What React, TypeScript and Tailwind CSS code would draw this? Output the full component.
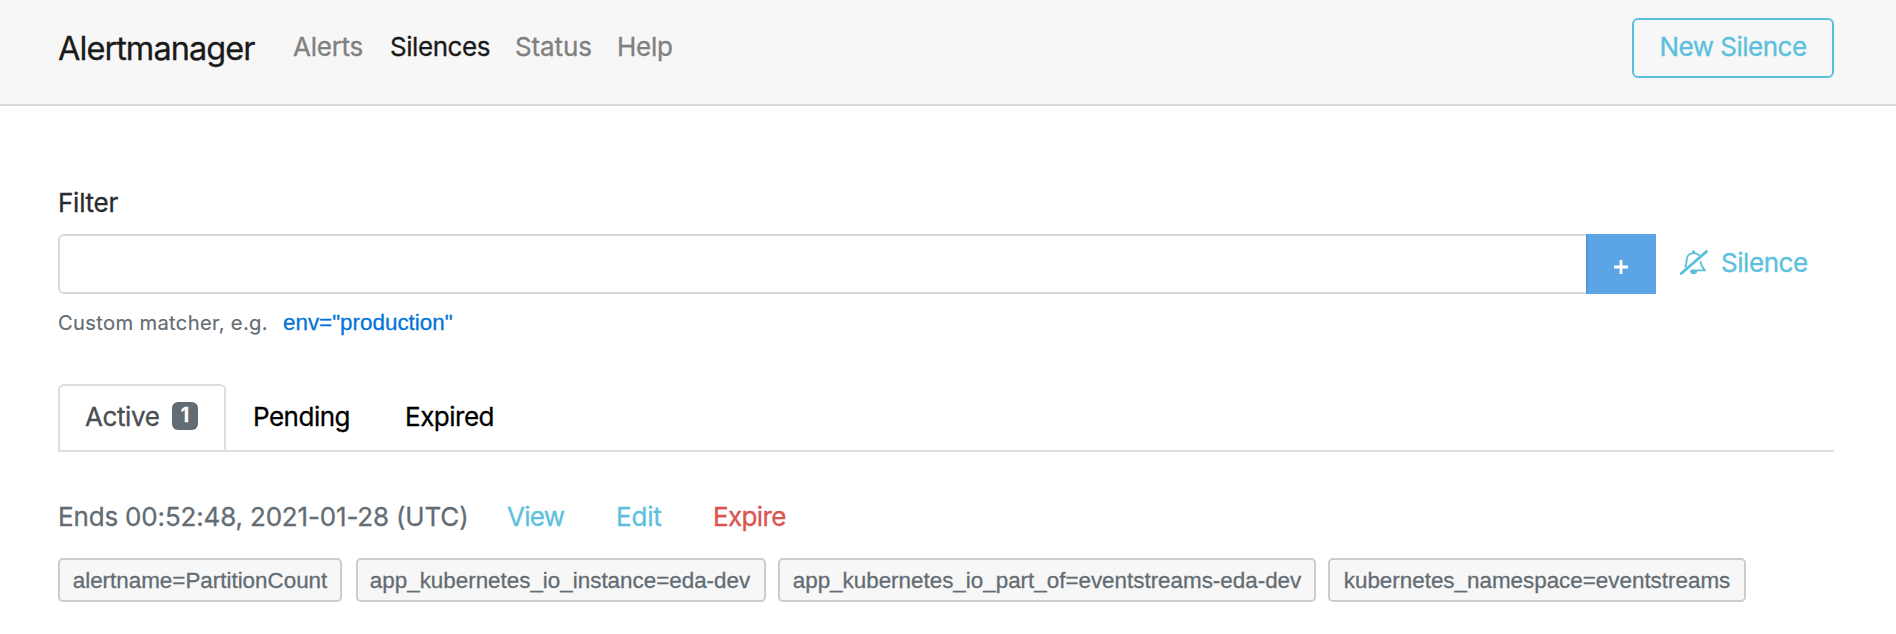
const nav = [
  { label: "Alerts", cls: "ml-[37px] w-[97px] tracking-[-0.25px] text-[#808080]" },
  { label: "Silences", cls: "w-[125px] tracking-[-0.45px] text-[#1a1a1a]" },
  { label: "Status", cls: "w-[102px] tracking-[-0.1px] text-[#808080]" },
  { label: "Help", cls: "tracking-[-0.3px] text-[#808080]" },
];

const matchers = [
  { text: "alertname=PartitionCount", cls: "w-[284px] mr-[14px]" },
  { text: "app_kubernetes_io_instance=eda-dev", cls: "w-[410px] mr-[12px] pr-[2px]" },
  { text: "app_kubernetes_io_part_of=eventstreams-eda-dev", cls: "w-[538px] mr-[12px]" },
  { text: "kubernetes_namespace=eventstreams", cls: "w-[418px]" },
];

function BellSlash() {
  return (
    <svg viewBox="0 0 30 28" className="h-[28px] w-[30px]" fill="none" stroke="currentColor" strokeLinecap="round" strokeLinejoin="round">
      <path d="M7.4 18.8C8.6 16.6 8.4 13.6 8.8 11C9.4 7.3 12 5.2 15.6 5.2C18.4 5.2 20.6 6.3 21.8 8.4" strokeWidth="1.8" />
      <path d="M22.6 14C22.8 18 24.6 19.6 27.2 22.4H13.5" strokeWidth="1.8" />
      <path d="M15.6 4.8V3.6" strokeWidth="2.8" />
      <path d="M12 22.5H19.4A3.7 3.7 0 0 1 12 22.5Z" fill="currentColor" stroke="none" />
      <path d="M3.3 25.5L28.5 3.5" strokeWidth="2.9" />
    </svg>
  );
}

export default function App() {
  return (
    <div className="h-[634px] overflow-hidden bg-white font-['Inter',sans-serif] text-[26px] leading-[39px] text-[#292b2c] [-webkit-text-stroke:0.3px]">
      <header className="flex h-[106px] items-start border-b-2 border-[#d9d9d9] bg-[#f7f7f7] px-[58px]">
        <a className="mt-[24px] w-[198px] whitespace-nowrap text-[32.5px] leading-[49px] tracking-[-0.95px] text-[#1a1a1a]">Alertmanager</a>
        <nav className="mt-[27px] flex">
          {nav.map((n) => (
            <a key={n.label} className={n.cls}>{n.label}</a>
          ))}
        </nav>
        <button className="ml-auto mt-[18px] mr-[4px] flex h-[60px] w-[202px] items-center justify-center rounded-[6px] border-2 border-[#5bc0de] pb-[3px] tracking-[-0.5px] text-[#5bc0de]">
          New Silence
        </button>
      </header>

      <main className="px-[58px] pt-[77px]">
        <label className="block tracking-[-0.25px]">Filter</label>
        <div className="mt-[12px] flex h-[60px]">
          <div className="w-[1528px] rounded-l-[6px] border-2 border-r-0 border-[#d9d9d9]" />
          <button className="flex w-[70px] items-center justify-center border-l-2 border-[#4a97dc] bg-[#5ba5e6] text-white">
            <svg viewBox="0 0 14 14" className="mt-[6px] mr-[2px] h-[14px] w-[14px]" stroke="currentColor" strokeWidth="2.8">
              <path d="M7 0V14M0 7H14" />
            </svg>
          </button>
          <a className="ml-[22px] flex text-[#5bc0de]">
            <span className="mt-[14px]"><BellSlash /></span>
            <span className="ml-[13px] mt-[9px] tracking-[-0.45px]">Silence</span>
          </a>
        </div>
        <div className="mt-[13px] flex h-[31px] items-baseline whitespace-nowrap leading-[31px]">
          <span className="w-[225px] text-[20.2px] tracking-[0.32px] text-[#636c72] [-webkit-text-stroke:0.15px]">Custom matcher, e.g.</span>
          <span className="font-['Liberation_Sans',sans-serif] text-[22.4px] text-[#0275d8]">env="production"</span>
        </div>

        <div className="mt-[46px] mr-[4px] flex h-[68px] border-b-2 border-[#dddddd]">
          <div className="flex w-[168px] rounded-t-[6px] border-2 border-b-0 border-[#dddddd] pl-[25px] pt-[11px] text-[#494e52]">
            <span className="w-[87px] tracking-[-0.4px]">Active</span>
            <span className="mt-[5px] flex h-[28px] w-[26px] items-center justify-center rounded-[6px] bg-[#636c72] text-[19.5px] font-bold leading-none text-white">
              1
            </span>
          </div>
          <span className="ml-[27px] w-[152px] pt-[13px] tracking-[-0.5px] text-black">Pending</span>
          <span className="pt-[13px] tracking-[-0.5px] text-black">Expired</span>
        </div>

        <div className="mt-[45px] flex whitespace-nowrap">
          <span className="w-[449px] tracking-[-0.17px] text-[#636c72]">Ends 00:52:48, 2021-01-28 (UTC)</span>
          <a className="w-[109px] tracking-[-0.7px] text-[#5bc0de]">View</a>
          <a className="w-[97px] tracking-[-0.2px] text-[#5bc0de]">Edit</a>
          <a className="tracking-[-0.65px] text-[#d9534f]">Expire</a>
        </div>

        <div className="mt-[22px] flex">
          {matchers.map((m) => (
            <span
              key={m.text}
              className={
                "flex h-[44px] shrink-0 items-center justify-center whitespace-nowrap rounded-[5px] border-2 border-[#cccccc] bg-[#f7f7f7] font-['Liberation_Sans',sans-serif] text-[22.4px] text-[#636c72] " +
                m.cls
              }
            >
              {m.text}
            </span>
          ))}
        </div>
      </main>
    </div>
  );
}
